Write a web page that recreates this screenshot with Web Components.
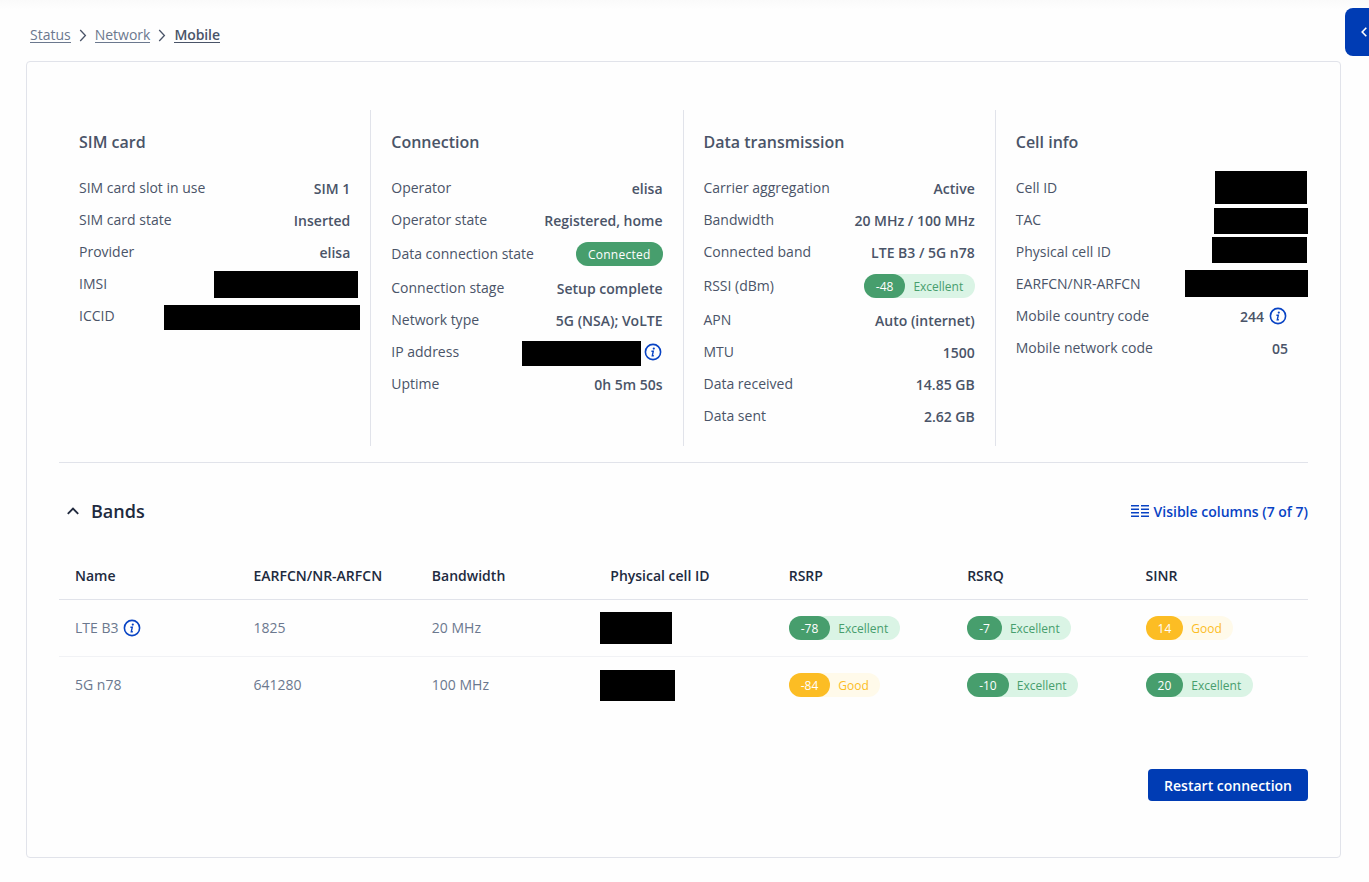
<!DOCTYPE html>
<html lang="en">
<head>
<meta charset="utf-8">
<title>Mobile</title>
<style>
  :root {
    --primary: #003cb4;
    --link: #0843c4;
    --text: #4a5468;
    --text-dark: #212a3e;
    --text-muted: #6b788e;
    --border: #e1e3ea;
    --green: #479e6d;
    --green-light: #daf4e5;
    --yellow: #fcbd24;
    --yellow-light: #fffaea;
  }
  body {
    margin: 0;
    min-height: 882px;
    background: #fefefe linear-gradient(#fafafa, #fefefe) no-repeat 0 0 / 100% 9px;
    font-family: "Open Sans", "Noto Sans", sans-serif;
    font-size: 14px;
    line-height: 24px;
    color: var(--text);
    overflow: hidden;
  }
</style>
</head>
<body>
<mobile-page></mobile-page>

<script>
class BreadCrumbs extends HTMLElement {
  connectedCallback() {
    const items = this.getAttribute('items').split(',');
    const arrow = '<svg width="8" height="13" viewBox="0 0 8 13"><path d="M1.2 1 6.4 6.5 1.2 12" fill="none" stroke="currentColor" stroke-width="1.3"/></svg>';
    this.attachShadow({ mode: 'open' });
    this.shadowRoot.innerHTML = `
      <style>
        :host { display: block; }
        nav { display: flex; align-items: center; height: 24px; }
        a {
          color: var(--text-muted);
          line-height: 15px;
          border-bottom: 1px solid currentColor;
        }
        a:last-child { color: var(--text); font-weight: 600; line-height: 14px; letter-spacing: -0.1px; }
        svg { margin: 0 8px; color: var(--text); }
      </style>
      <nav>${items.map(i => `<a>${i}</a>`).join(arrow)}</nav>
    `;
  }
}

class InfoIcon extends HTMLElement {
  connectedCallback() {
    this.attachShadow({ mode: 'open' });
    this.shadowRoot.innerHTML = `
      <style>
        :host { display: inline-flex; width: 18px; height: 18px; color: var(--link); }
      </style>
      <svg width="18" height="18" viewBox="0 0 18 18" fill="none" stroke="currentColor">
        <circle cx="9" cy="9" r="7.6" stroke-width="1.6"/>
        <circle cx="9.8" cy="5.6" r="1.1" fill="currentColor" stroke="none"/>
        <path d="M7.4 8.2h1.9l-1 4.5h1.5" stroke-width="1.4"/>
      </svg>
    `;
  }
}

// Pill with one solid part, or a solid value and a light caption
class StatusTag extends HTMLElement {
  connectedCallback() {
    const value = this.getAttribute('value');
    this.attachShadow({ mode: 'open' });
    this.shadowRoot.innerHTML = `
      <style>
        :host {
          display: inline-flex;
          height: 24px;
          border-radius: 12px;
          background: var(--green-light);
          color: var(--green);
          font-size: 12px;
          font-weight: 400;
          line-height: 25px;
        }
        :host([level="good"]) { background: var(--yellow-light); color: var(--yellow); }
        b {
          padding: 0 12px;
          border-radius: 12px;
          background: var(--green);
          color: #fff;
          font-weight: 400;
        }
        :host([level="good"]) b { background: var(--yellow); }
        :host(:not([value])) b { letter-spacing: 0.25px; }
        span { padding: 0 11.5px 0 8px; }
      </style>
      ${value ? `<b>${value}</b><span><slot></slot></span>` : '<b><slot></slot></b>'}
    `;
  }
}

// Black box laid over a private value; box="width height top side-offset"
class PrivateMask extends HTMLElement {
  connectedCallback() {
    const [w, h, top, offset] = this.getAttribute('box').split(' ');
    const side = this.getAttribute('side') || 'right';
    this.attachShadow({ mode: 'open' });
    this.shadowRoot.innerHTML = `
      <style>
        :host {
          position: absolute;
          width: ${w}px;
          height: ${h}px;
          top: ${top}px;
          ${side}: ${offset}px;
          background: #000;
        }
      </style>
    `;
  }
}

class InfoRow extends HTMLElement {
  connectedCallback() {
    this.attachShadow({ mode: 'open' });
    this.shadowRoot.innerHTML = `
      <style>
        :host {
          display: flex;
          justify-content: space-between;
          align-items: center;
          position: relative;
          height: 24px;
          margin-bottom: 8px;
        }
        :host([tall]) { height: 28px; }
        .value {
          display: flex;
          align-items: center;
          gap: 5px;
          font-weight: 600;
        }
        .text { padding-top: 2px; }
        ::slotted(info-icon) { margin-right: 1px; }
      </style>
      <span>${this.getAttribute('label')}</span>
      <span class="value"><span class="text">${this.getAttribute('value') || ''}</span><slot></slot></span>
    `;
  }
}

class InfoColumn extends HTMLElement {
  connectedCallback() {
    this.attachShadow({ mode: 'open' });
    this.shadowRoot.innerHTML = `
      <style>
        :host {
          display: block;
          flex: 0 0 25%;
          box-sizing: border-box;
          height: 336px;
          padding: 20px;
          border-right: 1px solid var(--border);
        }
        :host(:last-child) { border-right: 0; }
        h3 { margin: 0 0 22px; font-size: 16px; font-weight: 600; line-height: 24px; }
      </style>
      <h3>${this.getAttribute('heading')}</h3>
      <slot></slot>
    `;
  }
}

class BandsTable extends HTMLElement {
  connectedCallback() {
    const heads = ['Name', 'EARFCN/NR-ARFCN', 'Bandwidth', 'Physical cell ID', 'RSRP', 'RSRQ', 'SINR'];
    const rows = [
      ['LTE B3<info-icon></info-icon>', '1825', '20 MHz',
        '<private-mask side="left" box="72 32 12 5.7"></private-mask>',
        '<status-tag value="-78">Excellent</status-tag>',
        '<status-tag value="-7">Excellent</status-tag>',
        '<status-tag value="14" level="good">Good</status-tag>'],
      ['5G n78', '641280', '100 MHz',
        '<private-mask side="left" box="75 31 13 5.7"></private-mask>',
        '<status-tag value="-84" level="good">Good</status-tag>',
        '<status-tag value="-10">Excellent</status-tag>',
        '<status-tag value="20">Excellent</status-tag>']
    ];
    const row = (cells, cls) => `<div class="row ${cls}">${cells.map(c => `<div>${c}</div>`).join('')}</div>`;
    this.attachShadow({ mode: 'open' });
    this.shadowRoot.innerHTML = `
      <style>
        :host { display: block; color: var(--text-muted); }
        .row {
          display: grid;
          grid-template-columns: repeat(7, 1fr);
          height: 56px;
          border-bottom: 1px solid #f1f2f5;
        }
        .row:last-child { border-bottom-color: transparent; }
        .row > div {
          display: flex;
          align-items: center;
          gap: 5px;
          position: relative;
          padding: 0 16px;
        }
        .head {
          height: 47px;
          border-bottom-color: var(--border);
          color: var(--text-dark);
          font-weight: 600;
        }
      </style>
      ${row(heads, 'head')}
      ${rows.map(r => row(r, '')).join('')}
    `;
  }
}

class BandsHeader extends HTMLElement {
  connectedCallback() {
    this.attachShadow({ mode: 'open' });
    this.shadowRoot.innerHTML = `
      <style>
        :host { display: flex; align-items: center; justify-content: space-between; height: 24px; }
        .title {
          display: flex;
          align-items: center;
          gap: 12px;
          padding-left: 8px;
          color: var(--text-dark);
        }
        h2 { margin: 0; font-size: 18px; font-weight: 600; }
        .columns {
          display: flex;
          align-items: center;
          gap: 4.5px;
          color: var(--link);
          font-weight: 600;
        }
        .columns span { padding-top: 2px; }
      </style>
      <div class="title">
        <svg width="12" height="8" viewBox="0 0 12 8" fill="none" stroke="currentColor" stroke-width="1.9"><path d="M.8 6.8 6 1.6l5.2 5.2"/></svg>
        <h2>Bands</h2>
      </div>
      <div class="columns">
        <svg width="18" height="12" viewBox="0 0 18 12" stroke="currentColor" stroke-width="1.5"><path d="M0 .75h8M10 .75h8M0 4.25h8M10 4.25h8M0 7.75h8M10 7.75h8M0 11.25h8M10 11.25h8"/></svg>
        <span>Visible columns (7 of 7)</span>
      </div>
    `;
  }
}

class SideTab extends HTMLElement {
  connectedCallback() {
    this.attachShadow({ mode: 'open' });
    this.shadowRoot.innerHTML = `
      <style>
        :host {
          position: absolute;
          top: 8px;
          right: 0;
          width: 24px;
          height: 48px;
          border-radius: 8px 0 0 8px;
          background: var(--primary);
          display: flex;
          align-items: center;
          justify-content: flex-end;
          color: #fff;
        }
        svg { margin-right: 2px; }
      </style>
      <svg width="6" height="10" viewBox="0 0 6 10" fill="none" stroke="currentColor" stroke-width="1.6"><path d="M5.3 .8 1.2 5l4.1 4.2"/></svg>
    `;
  }
}

class MobilePage extends HTMLElement {
  connectedCallback() {
    this.attachShadow({ mode: 'open' });
    this.shadowRoot.innerHTML = `
      <style>
        :host { display: block; padding: 23px 28px 0 26px; }
        bread-crumbs { margin: 0 0 14px 4px; }
        .card {
          box-sizing: border-box;
          height: 797px;
          padding: 48px 32px 0;
          border: 1px solid var(--border);
          border-radius: 4px;
          background: #fefefe;
        }
        .info {
          display: flex;
          padding-bottom: 16px;
          border-bottom: 1px solid var(--border);
        }
        bands-header { margin: 36px 0 29px; }
        .actions { display: flex; justify-content: flex-end; margin-top: 55px; }
        button {
          height: 32px;
          padding: 1px 16px 0;
          border: 0;
          border-radius: 4px;
          background: var(--primary);
          color: #fff;
          font: 600 14px/24px "Open Sans", sans-serif;
        }
      </style>
      <bread-crumbs items="Status,Network,Mobile"></bread-crumbs>
      <div class="card">
        <div class="info">
          <info-column heading="SIM card">
            <info-row label="SIM card slot in use" value="SIM 1"></info-row>
            <info-row label="SIM card state" value="Inserted"></info-row>
            <info-row label="Provider" value="elisa"></info-row>
            <info-row label="IMSI"><private-mask box="144 27 -1 -7.75"></private-mask></info-row>
            <info-row label="ICCID"><private-mask box="196 25 1 -9.75"></private-mask></info-row>
          </info-column>
          <info-column heading="Connection">
            <info-row label="Operator" value="elisa"></info-row>
            <info-row label="Operator state" value="Registered, home"></info-row>
            <info-row label="Data connection state" tall><status-tag>Connected</status-tag></info-row>
            <info-row label="Connection stage" value="Setup complete"></info-row>
            <info-row label="Network type" value="5G (NSA); VoLTE"></info-row>
            <info-row label="IP address"><private-mask box="119 25 1 21.5"></private-mask><info-icon></info-icon></info-row>
            <info-row label="Uptime" value="0h 5m 50s"></info-row>
          </info-column>
          <info-column heading="Data transmission">
            <info-row label="Carrier aggregation" value="Active"></info-row>
            <info-row label="Bandwidth" value="20 MHz / 100 MHz"></info-row>
            <info-row label="Connected band" value="LTE B3 / 5G n78"></info-row>
            <info-row label="RSSI (dBm)" tall><status-tag value="-48">Excellent</status-tag></info-row>
            <info-row label="APN" value="Auto (internet)"></info-row>
            <info-row label="MTU" value="1500"></info-row>
            <info-row label="Data received" value="14.85 GB"></info-row>
            <info-row label="Data sent" value="2.62 GB"></info-row>
          </info-column>
          <info-column heading="Cell info">
            <info-row label="Cell ID"><private-mask box="92 33 -5 -19"></private-mask></info-row>
            <info-row label="TAC"><private-mask box="94 26 0 -20"></private-mask></info-row>
            <info-row label="Physical cell ID"><private-mask box="95 26 -3 -19"></private-mask></info-row>
            <info-row label="EARFCN/NR-ARFCN"><private-mask box="123 27 -2 -20"></private-mask></info-row>
            <info-row label="Mobile country code" value="244"><info-icon></info-icon></info-row>
            <info-row label="Mobile network code" value="05"></info-row>
          </info-column>
        </div>
        <bands-header></bands-header>
        <bands-table></bands-table>
        <div class="actions"><button>Restart connection</button></div>
      </div>
      <side-tab></side-tab>
    `;
  }
}

customElements.define('bread-crumbs', BreadCrumbs);
customElements.define('info-icon', InfoIcon);
customElements.define('status-tag', StatusTag);
customElements.define('private-mask', PrivateMask);
customElements.define('info-row', InfoRow);
customElements.define('info-column', InfoColumn);
customElements.define('bands-table', BandsTable);
customElements.define('bands-header', BandsHeader);
customElements.define('side-tab', SideTab);
customElements.define('mobile-page', MobilePage);
</script>
</body>
</html>
